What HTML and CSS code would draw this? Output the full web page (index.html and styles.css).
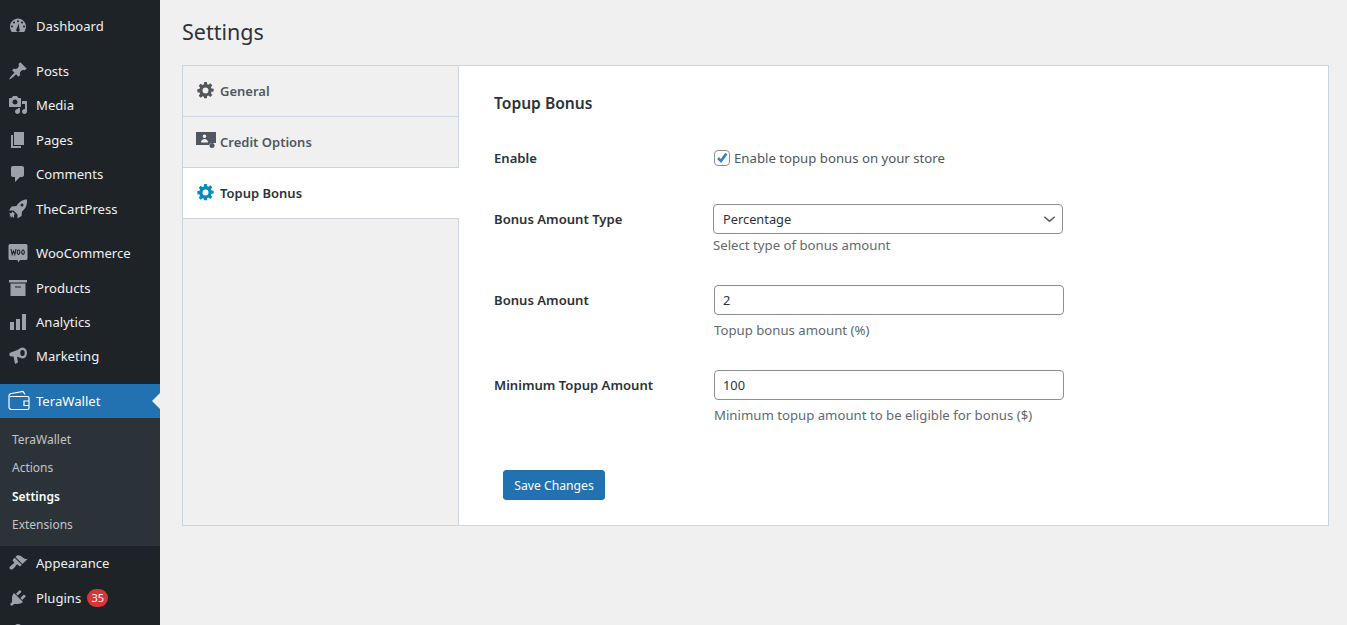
FILE: index.html
```html
<!DOCTYPE html>
<html lang="en">
<head>
    <meta charset="UTF-8">
    <meta name="viewport" content="width=device-width, initial-scale=1.0">
    <title>Settings</title>
    <link rel="stylesheet" href="styles.css">
</head>
<body>
    <svg class="defs" width="0" height="0">
        <symbol id="gear" viewBox="0 0 20 20">
            <path d="M8.400 0h3.200l.4 2.600 1.500.6 2.200-1.600 2.300 2.300-1.600 2.200.6 1.500 2.600.4v3.200l-2.600.4-.6 1.500 1.600 2.200-2.300 2.300-2.200-1.600-1.500.6-.4 2.600H8.400L8 17.400l-1.500-.6-2.200 1.600L2 16.100l1.600-2.200-.6-1.500L.4 12V8.400L3 8l.6-1.500L2 4.300 4.300 2l2.200 1.600L8 3zM10 6.500a3.500 3.500 0 1 0 0 7 3.500 3.500 0 0 0 0-7z" fill-rule="evenodd"/>
        </symbol>
    </svg>
    <div class="wrap">
        <aside class="sidebar">
            <ul class="menu">
                <li class="item"><svg class="ico" viewBox="0 0 20 20"><path d="M3.760 16h12.480A8.400 8.400 0 0 0 18 10.850C18 6.170 14.420 2.500 10 2.500S2 6.170 2 10.850c0 1.940.66 3.720 1.760 5.150zM10 4.200a1 1 0 1 1 0 2 1 1 0 0 1 0-2zM6 5.500a1 1 0 1 1 0 2 1 1 0 0 1 0-2zM14 5.500a1 1 0 1 1 0 2 1 1 0 0 1 0-2zM4 9.500a1 1 0 1 1 0 2 1 1 0 0 1 0-2zM16 9.500a1 1 0 1 1 0 2 1 1 0 0 1 0-2zM10.800 7.500l.5 5.200a1.800 1.800 0 1 1-2.600 0z" fill-rule="evenodd"/></svg>Dashboard</li>
                <li class="sep"></li>
                <li class="item"><svg class="ico" viewBox="0 0 20 20"><path d="M10.440 3.020l1.820-1.820 6.360 6.350-1.830 1.820c-1.050-.68-2.480-.57-3.410.36l-.75.75c-.92.93-1.040 2.350-.35 3.410l-1.830 1.820-2.410-2.410-2.800 2.790c-.42.42-3.380 2.710-3.800 2.290s1.860-3.390 2.280-3.810l2.790-2.790L4.100 9.360l1.830-1.820c1.050.69 2.480.57 3.400-.36l.75-.75c.93-.92 1.050-2.350.36-3.410z"/></svg>Posts</li>
                <li class="item"><svg class="ico" viewBox="0 0 20 20"><path d="M13 11V4c0-.55-.45-1-1-1h-1.670L9 1H5L3.670 3H2c-.55 0-1 .45-1 1v7c0 .55.45 1 1 1h10c.55 0 1-.45 1-1zM7 4.500c1.380 0 2.500 1.120 2.500 2.500S8.380 9.500 7 9.500 4.500 8.380 4.500 7 5.620 4.500 7 4.500zM14 6h5v10.500c0 1.380-1.120 2.500-2.500 2.500S14 17.880 14 16.500s1.120-2.500 2.500-2.500c.17 0 .34.02.5.050V9h-3V6zm-4 8.050V13h2v3.500c0 1.380-1.120 2.500-2.500 2.500S7 17.880 7 16.500 8.120 14 9.500 14c.17 0 .34.02.5.050z" fill-rule="evenodd"/></svg>Media</li>
                <li class="item"><svg class="ico" viewBox="0 0 20 20"><path d="M6 15V2h10v13H6zm-1 1h8v2H3V5h2v11z"/></svg>Pages</li>
                <li class="item"><svg class="ico" viewBox="0 0 20 20"><path d="M5 2h9c1.100 0 2 .9 2 2v7c0 1.100-.9 2-2 2h-2l-5 5v-5H5c-1.100 0-2-.9-2-2V4c0-1.100.9-2 2-2z"/></svg>Comments</li>
                <li class="item"><svg class="ico" viewBox="0 0 20 20"><path d="M19 .5c.4 5.500-1.500 9.500-5 12l-.5 4.500-4 2.500V15.500l-4-4H1l2.500-4 5-.5C11 2.800 15 .3 19 .5zM14 4.500a1.500 1.500 0 1 0 0 3 1.500 1.500 0 0 0 0-3zM4.500 12.500l2.500 2.500-1 1v3l-1.500-1.500L2.500 19l.5-2-2 .5 1.500-1.500L1 14.500l2.500-.5z" fill-rule="evenodd"/></svg>TheCartPress</li>
                <li class="sep"></li>
                <li class="item"><svg class="ico" viewBox="0 0 20 20"><path d="M2 1h16a1.500 1.500 0 0 1 1.500 1.500v13a1.500 1.500 0 0 1-1.500 1.500h-6l-1.500 2.500-1-2.500H2A1.500 1.500 0 0 1 .5 15.500v-13A1.500 1.500 0 0 1 2 1z"/><path class="woo-txt" d="M3 6l1.200 5.500L5.500 8l1.300 3.500L8 6M10.500 7a1.300 2.200 0 1 0 .01 0M15 7a1.300 2.200 0 1 0 .01 0"/></svg>WooCommerce</li>
                <li class="item"><svg class="ico" viewBox="0 0 20 20"><path d="M19 2v2.500H1V2zM2.500 5.500h15V18h-15zM7 8.500v1h6v-1z" fill-rule="evenodd"/></svg>Products</li>
                <li class="item"><svg class="ico" viewBox="0 0 20 20"><path d="M18 18V2h-4v16h4zm-6 0V7H8v11h4zm-6 0v-8H2v8h4z"/></svg>Analytics</li>
                <li class="item"><svg class="ico" viewBox="0 0 20 20"><path d="M14.500 1.500a4.500 5.500 0 1 1 0 11c-1.500 0-3-1.200-5.500-1.700l1 5.700-3 1.500-1.500-7.500H4L1.500 10V7l8.500-3.200c1.200-1 3-2.300 4.500-2.300zM14.500 4a2.200 3 0 1 0 0 6 2.200 3 0 0 0 0-6z" fill-rule="evenodd"/></svg>Marketing</li>
                <li class="sep"></li>
                <li class="item current">
                    <svg class="ico wallet" viewBox="0 0 24 22" fill="none"><path d="M2 6.500h17.500a1.500 1.500 0 0 1 1.500 1.500v10a1.500 1.500 0 0 1-1.500 1.500h-16A2.500 2.500 0 0 1 1 17V6a2.500 2.500 0 0 1 2.500-2.500L15 1.500l2 3M20.500 11h-4.500v4.500h4.500"/></svg>TeraWallet
                </li>
                <li>
                    <ul class="submenu">
                        <li>TeraWallet</li>
                        <li>Actions</li>
                        <li class="on">Settings</li>
                        <li>Extensions</li>
                    </ul>
                </li>
                <li class="item"><svg class="ico" viewBox="0 0 20 20"><path d="M14.480 11.060L7.410 3.990l1.500-1.500c.5-.56 2.300-.47 3.510.32 1.210.8 1.430 1.280 2.910 2.100 1.180.64 2.450 1.260 4.450.85zm-.71.71L6.700 4.700 4.930 6.470c-.39.39-.39 1.020 0 1.410l1.060 1.060c.39.39.39 1.030 0 1.420-.6.6-1.430 1.110-2.210 1.690-.35.26-.7.53-1.010.84C1.430 13.230 1 14.760 2 16c1.130 1.130 2.770.43 4.110-.92.31-.31.58-.66.85-1.010.57-.78 1.080-1.610 1.690-2.210.39-.39 1.020-.39 1.410 0l1.060 1.060c.39.39 1.020.39 1.410 0z"/></svg>Appearance</li>
                <li class="item"><svg class="ico" viewBox="0 0 20 20"><path d="M13.110 4.360L9.870 7.600 8 5.730l3.240-3.240c.35-.34 1.050-.2 1.560.32.520.51.660 1.210.310 1.550zm-8 1.770l.910-1.120 9.010 9.010-1.190.84c-.71.710-2.630 1.160-3.820 1.160H6.140L4.900 17.260c-.59.59-1.540.59-2.120 0-.59-.58-.59-1.530 0-2.120l1.240-1.240v-3.880c0-1.130.4-3.190 1.090-3.890zm7.260 3.970l3.240-3.240c.34-.35 1.040-.21 1.550.31.520.51.660 1.210.310 1.550l-3.240 3.250z"/></svg>Plugins<span class="badge">35</span></li>
                <li class="item"><svg class="ico" viewBox="0 0 20 20"><path d="M10 2a3.500 3.500 0 1 1 0 7 3.500 3.500 0 0 1 0-7zM3 18c0-5 3-8 7-8s7 3 7 8z"/></svg></li>
            </ul>
        </aside>
        <main class="content">
            <h1>Settings</h1>
            <div class="panel">
                <nav class="tabs">
                    <a class="tab"><svg class="tab-ico"><use href="#gear"/></svg>General</a>
                    <a class="tab"><svg class="tab-ico credit" viewBox="0 0 20 16"><path d="M0 0h20v11h-4a3 3 0 0 0-3 2H0zM8.500 2.500a1.800 1.800 0 1 1 0 3.600 1.800 1.800 0 0 1 0-3.600zM5 10.500c0-2 1.500-3.500 3.500-3.500S12 8.500 12 10.500z" fill-rule="evenodd"/><circle cx="16" cy="13.500" r="2.500"/></svg>Credit Options</a>
                    <a class="tab active"><svg class="tab-ico"><use href="#gear"/></svg>Topup Bonus</a>
                </nav>
                <form class="form">
                    <h2>Topup Bonus</h2>
                    <div class="row row-check">
                        <label>Enable</label>
                        <div class="check-line">
                            <span class="check"><svg viewBox="0 0 16 16"><path d="M3.500 8l3.300 3.500L13 3" fill="none"/></svg></span>
                            Enable topup bonus on your store
                        </div>
                    </div>
                    <div class="row row-select">
                        <label>Bonus Amount Type</label>
                        <div>
                            <div class="select">Percentage<svg viewBox="0 0 14 8"><path d="M1.500 1.500L7 6.500l5.500-5" fill="none"/></svg></div>
                            <p class="desc">Select type of bonus amount</p>
                        </div>
                    </div>
                    <div class="row row-input">
                        <label>Bonus Amount</label>
                        <div>
                            <div class="input">2</div>
                            <p class="desc">Topup bonus amount (%)</p>
                        </div>
                    </div>
                    <div class="row row-input">
                        <label>Minimum Topup Amount</label>
                        <div>
                            <div class="input">100</div>
                            <p class="desc">Minimum topup amount to be eligible for bonus ($)</p>
                        </div>
                    </div>
                    <button type="button" class="save">Save Changes</button>
                </form>
            </div>
        </main>
    </div>
</body>
</html>
```

FILE: styles.css
```css
html, body {
    margin: 0;
    padding: 0;
    height: 625px;
    overflow: hidden;
}

body {
    font-family: "Noto Sans", Arial, sans-serif;
    font-size: 13px;
    background-color: #f0f0f1;
    color: #3c434a;
}

.defs {
    display: block;
    height: 0;
}

ul {
    list-style: none;
    margin: 0;
    padding: 0;
}

.wrap {
    display: flex;
    height: 625px;
}

/* sidebar */
.sidebar {
    width: 160px;
    flex: none;
    background-color: #1d2327;
    overflow: hidden;
}

.menu {
    padding-top: 9px;
}

.item {
    display: flex;
    align-items: center;
    height: 34.4px;
    color: #f0f0f1;
    font-size: 13.1px;
    position: relative;
}

.sep {
    height: 10.4px;
}

.ico {
    width: 20px;
    height: 20px;
    margin: 0 8px;
    fill: #9ca2a7;
    flex: none;
}

.woo-txt {
    fill: none;
    stroke: #1d2327;
    stroke-width: 1.1;
}

.current {
    height: 34px;
    background-color: #2271b1;
    color: #fff;
}

.current::after {
    content: "";
    position: absolute;
    right: 0;
    top: 9px;
    border: 8px solid transparent;
    border-right-color: #f0f0f1;
    border-left-width: 0;
}

.wallet {
    width: 24px;
    height: 22px;
    margin: 0 4px 0 8px;
    stroke: #fff;
    stroke-width: 1.2;
    fill: none;
}

.submenu {
    background-color: #2c3338;
    padding: 8px 0 0;
    height: 128px;
    box-sizing: border-box;
    color: #c3c4c7;
    font-size: 12px;
}

.submenu li {
    height: 28.3px;
    line-height: 28.3px;
    padding-left: 12px;
}

.submenu .on {
    color: #fff;
    font-weight: 600;
}

.badge {
    margin-left: 6px;
    min-width: 21px;
    height: 18px;
    line-height: 18px;
    border-radius: 9px;
    background-color: #d63638;
    color: #fff;
    font-size: 11px;
    text-align: center;
}

/* main */
.content {
    flex: 1;
    padding: 0 18px 0 22px;
}

h1 {
    margin: 0;
    height: 65px;
    line-height: 64px;
    font-size: 21.5px;
    font-weight: 400;
    color: #2c3338;
}

.panel {
    display: flex;
    height: 461px;
    box-sizing: border-box;
    border: 1px solid #c9d6e2;
    background-color: #fff;
}

.tabs {
    width: 275px;
    flex: none;
    background-color: #f0f0f1;
    border-right: 1px solid #c9d6e2;
}

.tab {
    display: flex;
    align-items: center;
    height: 50px;
    padding-left: 14px;
    border-bottom: 1px solid #c9d6e2;
    color: #50575e;
    font-weight: 600;
    font-size: 13px;
}

.tab.active {
    background-color: #fff;
    color: #2c3338;
    margin-right: -1px;
}

.tab-ico {
    width: 17px;
    height: 17px;
    margin: -2px 6px 0 0;
    fill: #50575e;
    flex: none;
}

.tab.active .tab-ico {
    fill: #0a8bbf;
}

.tab-ico.credit {
    width: 20px;
    height: 16px;
    margin: 0 4px 0 -1px;
    position: relative;
    top: -2px;
}

.form {
    flex: 1;
    padding: 0 0 0 35px;
}

h2 {
    margin: 0;
    padding-top: 25px;
    height: 61px;
    line-height: 25px;
    font-size: 15.6px;
    font-weight: 600;
    color: #2c3338;
}

.row {
    display: flex;
}

.row label {
    width: 220px;
    flex: none;
    font-weight: 600;
    color: #2c3338;
    font-size: 13.1px;
    line-height: 18px;
}

.row-check {
    height: 52px;
}

.row-check label {
    margin-top: -3px;
}

.row-select {
    height: 81px;
    align-items: flex-start;
}

.row-select label {
    line-height: 30px;
}

.row-input {
    height: 85px;
    align-items: flex-start;
}

.row-input label {
    line-height: 30px;
}

.check-line {
    display: flex;
    align-items: center;
    gap: 4px;
    height: 16px;
    margin-top: -5px;
    position: relative;
    top: 3px;
    font-size: 13.2px;
    color: #50575e;
}

.check {
    width: 14px;
    height: 14px;
    border: 1px solid #8c8f94;
    border-radius: 4px;
    background-color: #fff;
    display: block;
    flex: none;
}

.check svg {
    display: block;
    width: 14px;
    height: 14px;
    stroke: #3582c4;
    stroke-width: 3;
}

.select, .input {
    box-sizing: border-box;
    width: 350px;
    height: 30px;
    border: 1px solid #8c8f94;
    border-radius: 4px;
    background-color: #fff;
    padding-left: 8px;
    line-height: 28px;
    font-size: 12.8px;
    color: #2c3338;
}

.select {
    display: flex;
    align-items: center;
    justify-content: space-between;
    margin-left: -1px;
    padding-left: 9px;
}

.select svg {
    width: 13px;
    height: 8px;
    margin-right: 6px;
    stroke: #50575e;
    stroke-width: 1.6;
}

.desc {
    margin: 6px 0 0;
    line-height: 19px;
    font-size: 13.2px;
    color: #646970;
}

.row-select .desc {
    margin: 2px 0 0 -1px;
}

.save {
    display: block;
    margin: 15px 0 0 9px;
    width: 102px;
    height: 30px;
    padding: 0;
    border: 1px solid #2271b1;
    border-radius: 3px;
    background-color: #2271b1;
    color: #fff;
    font-family: inherit;
    font-size: 12.2px;
}
```
